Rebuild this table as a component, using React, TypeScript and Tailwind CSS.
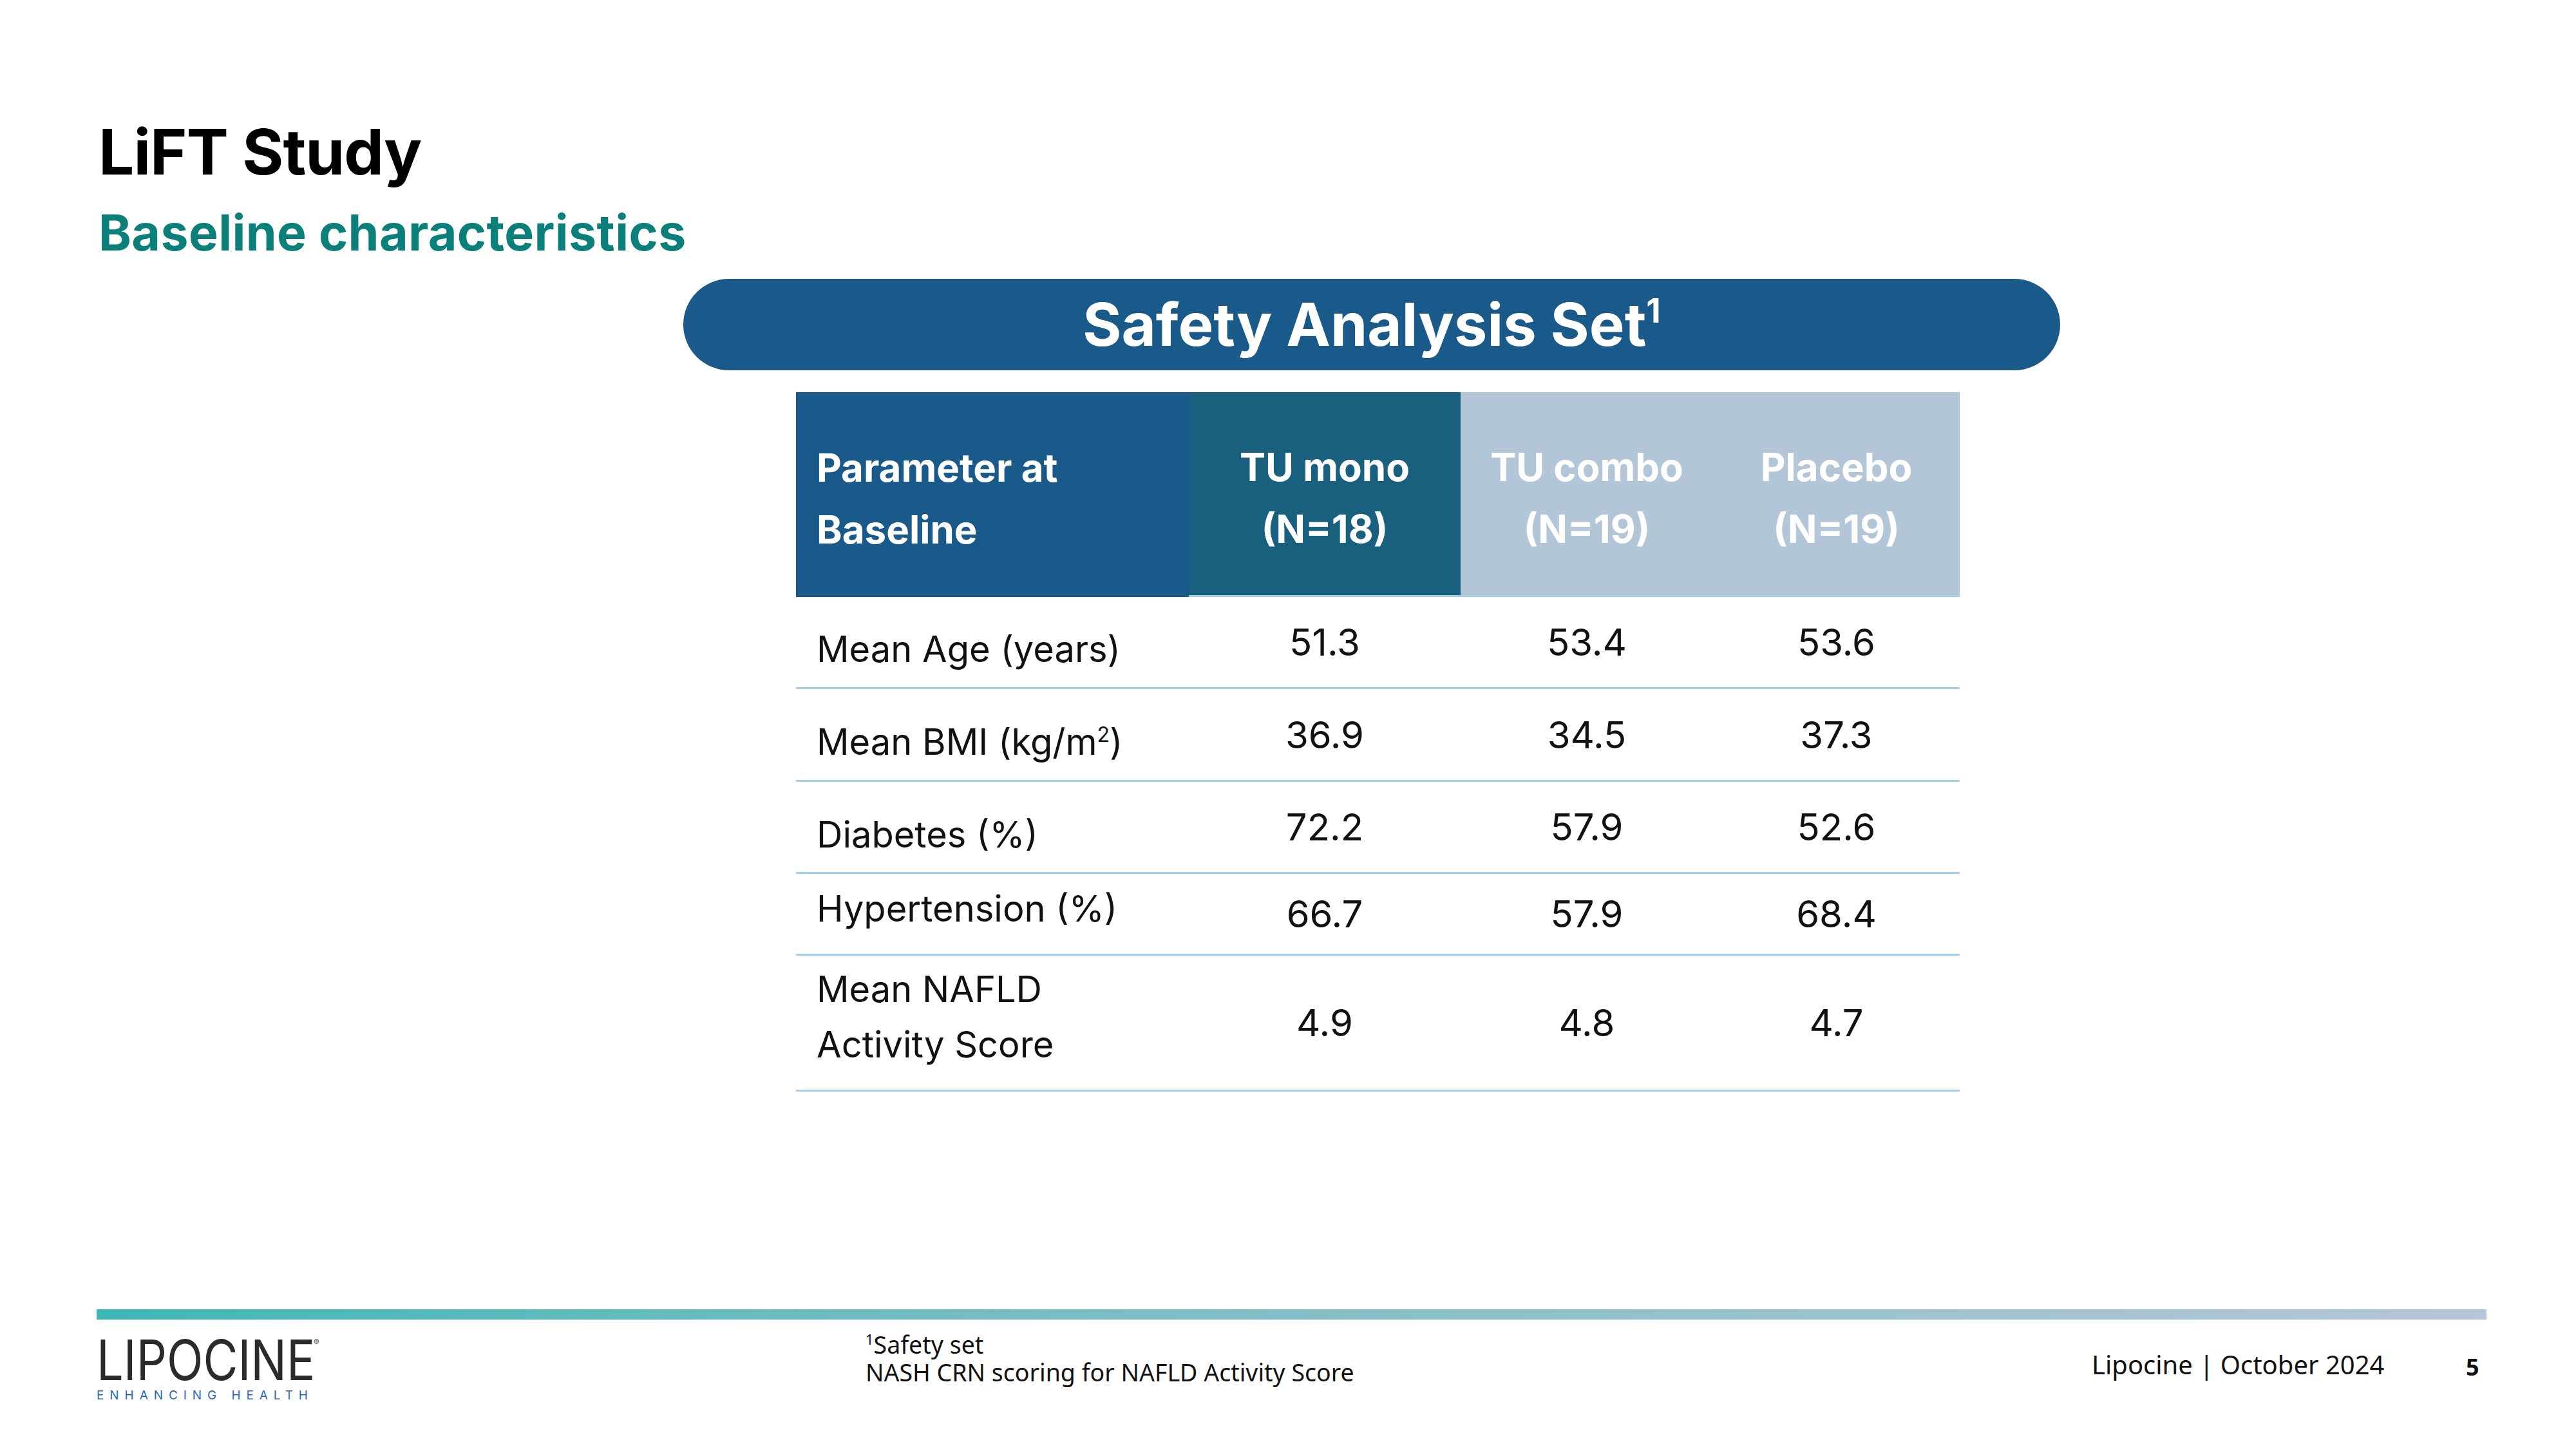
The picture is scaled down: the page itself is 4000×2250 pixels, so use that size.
const cols = "grid grid-cols-[610px_422px_392px_383px]";

const rows = [
  { label: ["Mean Age (years)"], values: ["51.3", "53.4", "53.6"], h: "h-[143px]", lab: "pt-[22px]" },
  { label: ["Mean BMI (kg/m", "2", ")"], values: ["36.9", "34.5", "37.3"], h: "h-[144px]", lab: "pt-[22px]" },
  { label: ["Diabetes (%)"], values: ["72.2", "57.9", "52.6"], h: "h-[143px]", lab: "pt-[24px]" },
  { label: ["Hypertension (%)"], values: ["66.7", "57.9", "68.4"], h: "h-[127px]", lab: "pb-[16px]" },
];

function Logo() {
  return (
    <div className="flex flex-col items-start font-['Inter',sans-serif]">
      <div className="flex items-start">
        <div className="w-[337px]">
          <span className="inline-block origin-left text-[87px] font-normal leading-none text-[#2b2b2b] scale-x-85">
            LIPOCINE
          </span>
        </div>
        <span className="mt-[10px] text-[13px] leading-none text-[#555]">®</span>
      </div>
      <span className="mt-[2px] text-[19px] leading-none tracking-[0.47em] text-[#2a6ab5]">ENHANCING HEALTH</span>
    </div>
  );
}

export default function App() {
  return (
    <div className="w-[4000px] h-[2250px] bg-white flex flex-col font-['Inter',sans-serif] text-black">
      {/* Title */}
      <div className="pl-[153px] pt-[187px]">
        <h1 className="text-[98px] font-bold leading-none tracking-[-0.01em]">LiFT Study</h1>
        <h2 className="mt-[38px] text-[77px] font-bold leading-none tracking-[0.005em] text-[#0b7f7a]">
          Baseline characteristics
        </h2>
      </div>

      {/* Banner */}
      <div className="ml-[1061px] mt-[33px] w-[2138px] h-[142px] rounded-full bg-[#1a5a8a] flex items-center justify-center">
        <span className="text-[92px] font-bold leading-none text-white">
          Safety Analysis Set<sup className="text-[52px] relative -top-[36px]">1</sup>
        </span>
      </div>

      {/* Table */}
      <div className="ml-[1236px] mt-[34px] w-[1807px]">
        <div className={`${cols} h-[318px] text-[60px] font-bold leading-[96px] text-white`}>
          <div className="bg-[#1a5a8a] flex flex-col justify-center pl-[32px] pt-[12px]">
            <span>Parameter at</span>
            <span>Baseline</span>
          </div>
          <div className="bg-[#19607f] border-b-[3px] border-[#a3d0ec] flex flex-col items-center justify-center pt-[12px]">
            <span>TU mono</span>
            <span>(N=18)</span>
          </div>
          <div className="bg-[#b3c6d8] border-b-[3px] border-[#a3d0ec] flex flex-col items-center justify-center pt-[12px]">
            <span>TU combo</span>
            <span>(N=19)</span>
          </div>
          <div className="bg-[#b3c6d8] border-b-[3px] border-[#a3d0ec] flex flex-col items-center justify-center pt-[12px]">
            <span>Placebo</span>
            <span>(N=19)</span>
          </div>
        </div>

        {rows.map((r) => (
          <div key={r.values.join()} className={`${cols} ${r.h} border-b-[3px] border-[#a3d0ec] text-[56px] leading-none text-[#111]`}>
            <div className={`flex items-center pl-[32px] ${r.lab}`}>
              {r.label.length === 1 ? (
                <span>{r.label[0]}</span>
              ) : (
                <span>
                  {r.label[0]}
                  <sup className="text-[32px] relative -top-[20px]">{r.label[1]}</sup>
                  {r.label[2]}
                </span>
              )}
            </div>
            {r.values.map((v, i) => (
              <div key={i} className="flex items-center justify-center text-[58px]">
                {v}
              </div>
            ))}
          </div>
        ))}

        <div className={`${cols} h-[211px] border-b-[3px] border-[#a3d0ec] text-[56px] text-[#111]`}>
          <div className="flex flex-col justify-center pl-[32px] pb-[18px] leading-[86px]">
            <span>Mean NAFLD</span>
            <span>Activity Score</span>
          </div>
          {["4.9", "4.8", "4.7"].map((v) => (
            <div key={v} className="flex items-center justify-center text-[58px] leading-none">
              {v}
            </div>
          ))}
        </div>
      </div>

      {/* Footer */}
      <div className="mt-auto h-[217px] px-[150px] flex flex-col">
        <div className="h-[16px] w-[3711px] bg-gradient-to-r from-[#3db8b5] to-[#b5c5db]" />
        <div className="flex items-start font-['Noto_Sans',sans-serif] text-[#111]">
          <div className="w-[1194px] pt-[19px]">
            <Logo />
          </div>
          <div className="w-[1904px] pt-[17px] text-[37.5px] leading-[43px]">
            <div>
              <sup className="text-[22px] relative -top-[14px]">1</sup>Safety set
            </div>
            <div>NASH CRN scoring for NAFLD Activity Score</div>
          </div>
          <div className="w-[581px] pt-[46px] text-[40px] leading-[48px]">Lipocine | October 2024</div>
          <div className="pt-[52px] text-[36px] font-bold leading-[43px]">5</div>
        </div>
      </div>
    </div>
  );
}
